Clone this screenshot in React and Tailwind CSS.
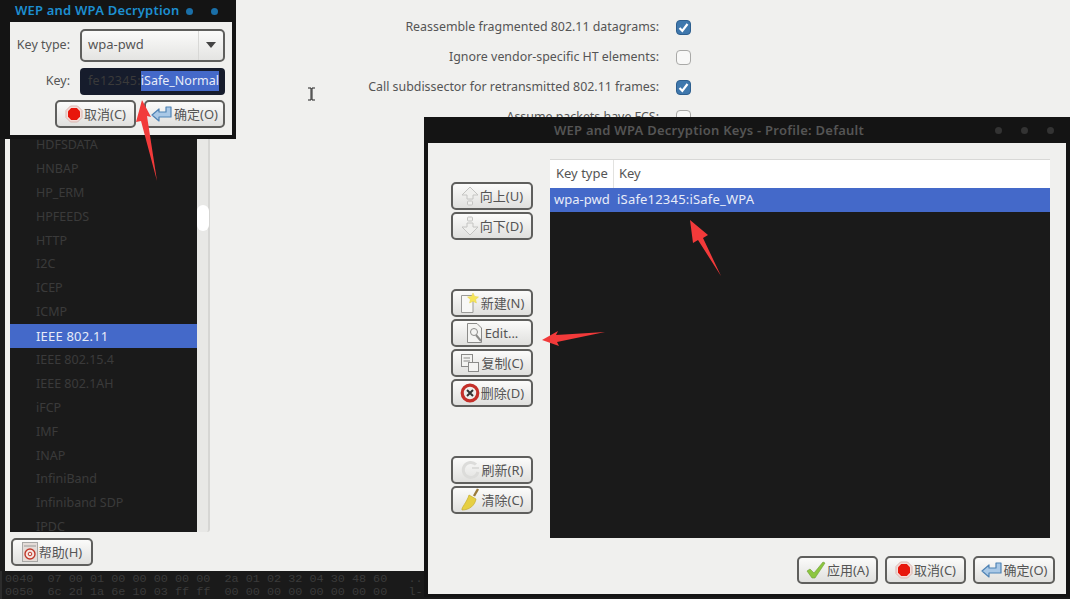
import React from "react";

const font = "font-['Noto_Sans','Noto_Sans_CJK_SC',sans-serif]";

const protocols = [
  "HDFSDATA", "HNBAP", "HP_ERM", "HPFEEDS", "HTTP", "I2C", "ICEP", "ICMP", "IEEE 802.11",
  "IEEE 802.15.4", "IEEE 802.1AH", "iFCP", "IMF", "INAP", "InfiniBand", "Infiniband SDP", "IPDC",
];

const options = [
  { label: "Reassemble fragmented 802.11 datagrams:", checked: true },
  { label: "Ignore vendor-specific HT elements:", checked: false },
  { label: "Call subdissector for retransmitted 802.11 frames:", checked: true },
  { label: "Assume packets have FCS:", checked: false },
];

const StopIcon = () => (
  <svg width="18" height="18" viewBox="0 0 18 18">
    <polygon points="5.5,1 12.5,1 17,5.5 17,12.5 12.5,17 5.5,17 1,12.5 1,5.5" fill="#f4dcd8" stroke="#d9b5b0" />
    <polygon points="6.2,3 11.8,3 15,6.2 15,11.8 11.8,15 6.2,15 3,11.8 3,6.2" fill="#e8160c" />
  </svg>
);

const OkIcon = () => (
  <svg width="22" height="18" viewBox="0 0 22 18">
    <path d="M1 10 L8 4 V7 H15 V2 H20 V12 H8 V16 Z" fill="#a9c8e6" stroke="#4f83b5" strokeWidth="1.2" strokeLinejoin="round" />
  </svg>
);

const ApplyIcon = () => (
  <svg width="20" height="18" viewBox="0 0 20 18">
    <path d="M1 10 L4 8 L8 12 L17 1 L19 2 L9 17 L6 17 Z" fill="#8cc63f" stroke="#6d9d35" strokeWidth="0.6" />
  </svg>
);

const UpIcon = () => (
  <svg width="18" height="20" viewBox="0 0 18 20" fill="#efefed" stroke="#c4c4c2">
    <path d="M9 1 L17 9 H12 V13 H6 V9 H1 Z" />
    <rect x="6.5" y="15" width="5" height="4" rx="1" />
  </svg>
);

const DownIcon = () => (
  <svg width="18" height="20" viewBox="0 0 18 20" fill="#efefed" stroke="#c4c4c2">
    <rect x="6.5" y="1" width="5" height="4" rx="1" />
    <path d="M9 19 L1 11 H6 V7 H12 V11 H17 Z" />
  </svg>
);

const NewIcon = () => (
  <svg width="20" height="22" viewBox="0 0 20 22">
    <path d="M1.5 3.5 H13 V20.5 H1.5 Z" fill="#f8f8f6" stroke="#9a9a98" />
    <polygon points="13,1 14.6,4.4 18.5,5 15.6,7.6 16.4,11 13,9.2 9.6,11 10.4,7.6 7.5,5 11.4,4.4" fill="#f6e65a" stroke="#e4d04a" strokeWidth="0.5" />
  </svg>
);

const EditIcon = () => (
  <svg width="18" height="22" viewBox="0 0 18 22" fill="none" stroke="#8b8b89">
    <path d="M1.5 1.5 H11 L15.5 6 V20.5 H1.5 Z" fill="#f4f4f2" />
    <circle cx="8" cy="10" r="3.5" />
    <path d="M10 13 L15 19" strokeWidth="2" />
  </svg>
);

const CopyIcon = () => (
  <svg width="20" height="20" viewBox="0 0 20 20" stroke="#8b8b89" fill="#f4f4f2">
    <rect x="1.5" y="1.5" width="11" height="12" />
    <path d="M3.5 5 H10 M3.5 8 H10" fill="none" />
    <rect x="8.5" y="9.5" width="10" height="9" />
  </svg>
);

const DeleteIcon = () => (
  <svg width="20" height="20" viewBox="0 0 20 20">
    <circle cx="10" cy="10" r="7.8" fill="#eeeeec" stroke="#c4302a" strokeWidth="3.2" />
    <path d="M7 7 L13 13 M13 7 L7 13" stroke="#333" strokeWidth="2" />
  </svg>
);

const RefreshIcon = () => (
  <svg width="20" height="20" viewBox="0 0 20 20" fill="none" stroke="#dcdcda" strokeWidth="3">
    <path d="M17 12 A7.5 7.5 0 1 1 15 4.5" />
    <path d="M11 8 H18" strokeWidth="2" />
  </svg>
);

const BroomIcon = () => (
  <svg width="20" height="24" viewBox="0 0 20 24">
    <path d="M14 8 L18 1" stroke="#9a7a3a" strokeWidth="2.4" />
    <path d="M9 7 L16 11 C15 17 10 22 2 22 C1 20 7 14 9 7 Z" fill="#e6cf42" stroke="#c6ac2e" strokeWidth="0.7" />
  </svg>
);

const HelpIcon = () => (
  <svg width="16" height="20" viewBox="0 0 16 20">
    <rect x="0.5" y="0.5" width="15" height="19" fill="#e4dcd8" stroke="#a8a8a6" />
    <path d="M2 4 H14" stroke="#9a9a98" />
    <circle cx="8" cy="12" r="5" fill="#f6e6e2" stroke="#c0392b" strokeWidth="1.4" />
    <circle cx="8" cy="12" r="1.8" fill="none" stroke="#c0392b" />
  </svg>
);

const Btn = ({ icon, label, className = "w-[82px]" }) => (
  <button
    className={`${className} h-[28px] flex items-center justify-center gap-px rounded-[5px] border-2 border-[#5f5f5d] bg-gradient-to-b from-[#fbfbfa] to-[#e0e0de] text-[13px] text-[#555] leading-none shrink-0`}
  >
    {icon}
    <span>{label}</span>
  </button>
);

const Checkbox = ({ checked }) =>
  checked ? (
    <span className="w-[15px] h-[15px] rounded-[4px] bg-[#3f78ad] border border-[#2e5f8e] flex items-center justify-center">
      <svg width="11" height="11" viewBox="0 0 11 11" fill="none" stroke="#fff" strokeWidth="2.2">
        <path d="M1.5 6 L4.3 8.8 L9.5 2" />
      </svg>
    </span>
  ) : (
    <span className="w-[15px] h-[15px] rounded-[4px] bg-[#f8f8f7] border border-[#a9a9a7]" />
  );

const ProtocolList = () => (
  <div className="flex-1 flex min-h-0">
    <div className="w-[187px] bg-[#1a1a1a] overflow-hidden pt-[133px]">
      {protocols.map((name) =>
        name === "IEEE 802.11" ? (
          <div key={name} className="h-[23.9px] bg-[#4469c9] text-[#e8ecf8] pl-[26px] text-[13px] tracking-[0.2px] leading-[24px]">
            {name}
          </div>
        ) : (
          <div key={name} className="h-[23.9px] text-[#3a3a3a] pl-[26px] text-[12.5px] leading-[24px] whitespace-nowrap">
            {name}
          </div>
        )
      )}
    </div>
    <div className="w-[13px] bg-[#e8e8e6] border-r-2 border-[#d6d6d4] rounded-b-[3px] pt-[205px]">
      <div className="w-[12px] h-[26px] rounded-[6px] bg-white" />
    </div>
  </div>
);

const OptionsPane = () => (
  <div className="w-[481px] flex flex-col pt-[12px] shrink-0">
    {options.map((opt) => (
      <div key={opt.label} className="h-[30px] flex items-center justify-end gap-[17px]">
        <span className="text-[12.4px] text-[#555]">{opt.label}</span>
        <Checkbox checked={opt.checked} />
      </div>
    ))}
  </div>
);

const HexDump = () => (
  <div className="flex-1 bg-[#1a1a1a] border-l-[2px] border-[#2c2c2c] text-[11.8px] leading-[13px] text-[#3a3a3a] font-['Liberation_Mono',monospace] pt-[2px] pl-[3px] whitespace-pre overflow-hidden">
    <div>0040  07 00 01 00 00 00 00 00  2a 01 02 32 04 30 48 60   ..</div>
    <div>0050  6c 2d 1a 6e 10 03 ff ff  00 00 00 00 00 00 00 00   l-</div>
  </div>
);

const KeyPopup = () => (
  <div className="absolute left-0 top-0 w-[236px] h-[139px] bg-[#141414] flex flex-col pl-[10px] pr-[4px] pb-[4px]">
    <div className="h-[22px] flex items-center pl-[5px] gap-[6px] text-[13px] font-semibold text-[#1d8fd0] tracking-[0.2px]">
      <span>WEP and WPA Decryption</span>
      <span className="w-[7px] h-[7px] rounded-full bg-[#1a6fa8]" />
      <span className="w-[7px] h-[7px] rounded-full bg-[#1a6fa8] ml-[12px]" />
    </div>
    <div className="flex-1 bg-[#f0f0ee] flex flex-col pt-[6px] pr-[7px]">
      <div className="flex items-center h-[34px]">
        <span className="w-[60px] text-right text-[12.5px] text-[#555]">Key type:</span>
        <div className="ml-[10px] w-[145px] h-[33px] rounded-[5px] border-2 border-[#5f5f5d] bg-gradient-to-b from-[#fbfbfa] to-[#e4e4e2] flex items-center text-[13px] text-[#555]">
          <span className="flex-1 pl-[6px]">wpa-pwd</span>
          <span className="w-[25px] h-full border-l border-[#d8d8d6] flex items-center justify-center">
            <span className="w-0 h-0 border-x-[5px] border-x-transparent border-t-[6px] border-t-[#444]" />
          </span>
        </div>
      </div>
      <div className="flex items-center mt-[5px] h-[28px]">
        <span className="w-[60px] text-right text-[12.5px] text-[#555]">Key:</span>
        <div className="ml-[10px] w-[145px] h-[27px] rounded-[4px] bg-[#161c2c] flex items-center justify-end pr-[6px] text-[12.5px] overflow-hidden whitespace-nowrap">
          <span className="text-[#3a3a3a] tracking-[0.3px]">fe12345:</span>
          <span className="bg-[#4469c9] text-[#e8ecf8] leading-[20px]">iSafe_Normal</span>
        </div>
      </div>
      <div className="flex justify-end gap-[8px] mt-[5px]">
        <Btn icon={<StopIcon />} label="取消(C)" className="w-[81px]" />
        <Btn icon={<OkIcon />} label="确定(O)" className="w-[81px]" />
      </div>
    </div>
  </div>
);

const KeysDialog = () => (
  <div className="absolute left-[424px] top-[117px] w-[646px] h-[480px] bg-[#141414] flex flex-col px-[4px] pb-[4px]">
    <div className="h-[26px] pt-[1px] flex items-center justify-center relative pr-[76px] text-[13px] font-semibold text-[#555] tracking-[0.25px] shrink-0">
      <span>WEP and WPA Decryption Keys - Profile: Default</span>
      <span className="absolute right-[64px] top-[10px] w-[7px] h-[7px] rounded-full bg-[#333]" />
      <span className="absolute right-[38px] top-[10px] w-[7px] h-[7px] rounded-full bg-[#333]" />
      <span className="absolute right-[12px] top-[10px] w-[7px] h-[7px] rounded-full bg-[#333]" />
    </div>
    <div className="flex-1 bg-[#f0f0ee] flex flex-col pt-[16px] pb-[10px] pl-[23px] pr-[11px]">
      <div className="flex h-[379px]">
        <div className="w-[82px] flex flex-col gap-[2px] pt-[23px]">
          <Btn icon={<UpIcon />} label="向上(U)" />
          <Btn icon={<DownIcon />} label="向下(D)" />
          <div className="h-[45px]" />
          <Btn icon={<NewIcon />} label="新建(N)" />
          <Btn icon={<EditIcon />} label="Edit..." />
          <Btn icon={<CopyIcon />} label="复制(C)" />
          <Btn icon={<DeleteIcon />} label="删除(D)" />
          <div className="h-[45px]" />
          <Btn icon={<RefreshIcon />} label="刷新(R)" />
          <Btn icon={<BroomIcon />} label="清除(C)" />
        </div>
        <div className="ml-[17px] w-[500px] flex flex-col bg-[#1a1a1a] border-t border-[#d8d8d6]">
          <div className="h-[28px] bg-white flex items-center text-[13px] text-[#555]">
            <span className="w-[64px] pl-[6px] h-full flex items-center border-r border-[#e2e2e0]">Key type</span>
            <span className="pl-[5px]">Key</span>
          </div>
          <div className="h-[24px] bg-[#4469c9] flex items-center text-[13px] text-[#e8ecf8]">
            <span className="w-[67px] pl-[4px]">wpa-pwd</span>
            <span className="tracking-[0.2px]">iSafe12345:iSafe_WPA</span>
          </div>
        </div>
      </div>
      <div className="flex justify-end gap-[7px] pt-[18px]">
        <Btn icon={<ApplyIcon />} label="应用(A)" className="w-[81px]" />
        <Btn icon={<StopIcon />} label="取消(C)" className="w-[81px]" />
        <Btn icon={<OkIcon />} label="确定(O)" className="w-[82px]" />
      </div>
    </div>
  </div>
);

// red annotation arrows and the text cursor sit over everything else
const Annotations = () => (
  <svg className="absolute inset-0 pointer-events-none" width="1070" height="599" viewBox="0 0 1070 599">
    <polygon points="142,100 151,117 147,116 157,181 141,121 136,122" fill="#f23a3a" />
    <polygon points="690,220 708,235 703,238 721,276 698,240 693,243" fill="#f23a3a" />
    <polygon points="542,340 558,331 556,335 605,332 557,342 559,346" fill="#f23a3a" />
    <path d="M308 88 H311 V100 H308 M315 88 H312 V100 H315" fill="none" stroke="#222" strokeWidth="1" />
  </svg>
);

export default function App() {
  return (
    <div className={`${font} relative w-[1070px] h-[599px] overflow-hidden bg-[#1a1a1a] flex flex-col`}>
      <div className="h-[571px] ml-[5px] bg-[#f0f0ee] flex shrink-0">
        <div className="w-[205px] pl-[5px] flex flex-col pb-[5px] shrink-0">
          <ProtocolList />
          <div className="pt-[6px] pl-[1px]">
            <Btn icon={<HelpIcon />} label="帮助(H)" />
          </div>
        </div>
        <OptionsPane />
      </div>
      <HexDump />
      <KeyPopup />
      <KeysDialog />
      <Annotations />
    </div>
  );
}
